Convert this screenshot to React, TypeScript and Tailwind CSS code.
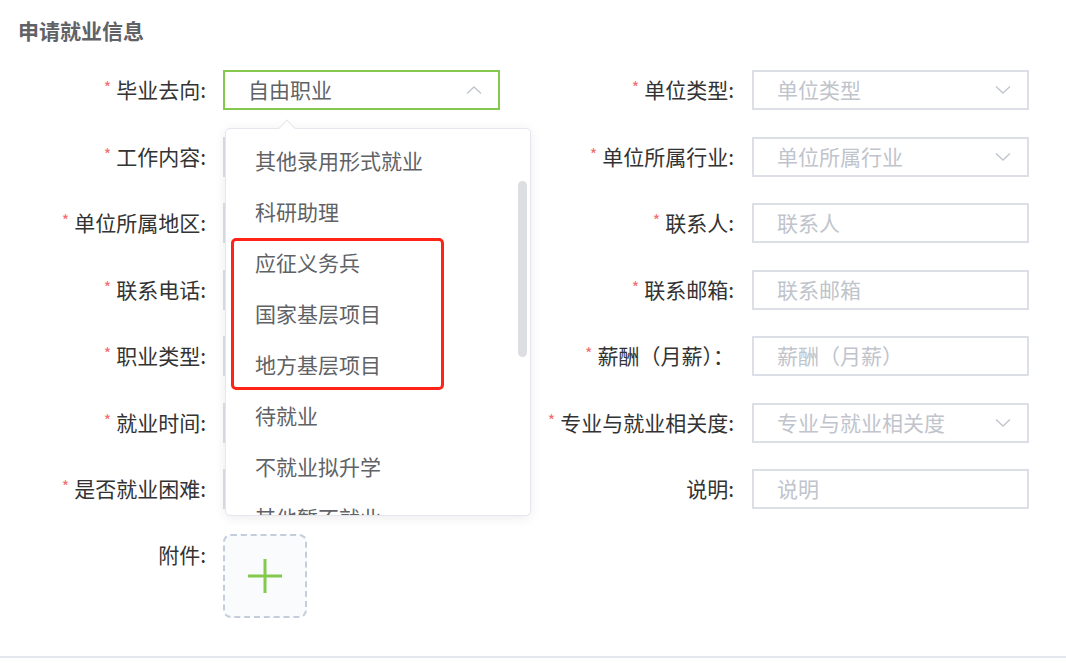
import React from 'react';

type Field = {
    label: string;
    required?: boolean;
    placeholder?: string;
    value?: string;
    select?: boolean;
    open?: boolean;
};

// left column fields below 毕业去向 sit under the open dropdown, so no placeholders there
const rows: [Field, Field][] = [
    [
        { label: '毕业去向:', required: true, value: '自由职业', select: true, open: true },
        { label: '单位类型:', required: true, placeholder: '单位类型', select: true },
    ],
    [
        { label: '工作内容:', required: true },
        { label: '单位所属行业:', required: true, placeholder: '单位所属行业', select: true },
    ],
    [
        { label: '单位所属地区:', required: true },
        { label: '联系人:', required: true, placeholder: '联系人' },
    ],
    [
        { label: '联系电话:', required: true },
        { label: '联系邮箱:', required: true, placeholder: '联系邮箱' },
    ],
    [
        { label: '职业类型:', required: true },
        { label: '薪酬（月薪）：', required: true, placeholder: '薪酬（月薪）' },
    ],
    [
        { label: '就业时间:', required: true },
        { label: '专业与就业相关度:', required: true, placeholder: '专业与就业相关度', select: true },
    ],
    [
        { label: '是否就业困难:', required: true },
        { label: '说明:', placeholder: '说明' },
    ],
];

const options = [
    '其他录用形式就业',
    '科研助理',
    '应征义务兵',
    '国家基层项目',
    '地方基层项目',
    '待就业',
    '不就业拟升学',
    '其他暂不就业',
];

function Chevron({ up }: { up?: boolean }) {
    return (
        <svg width="16" height="9" viewBox="0 0 16 9" fill="none" className="absolute right-[16px] top-1/2 -translate-y-1/2">
            <path
                d={up ? 'M1 8L8 1.5L15 8' : 'M1 1L8 7.5L15 1'}
                stroke="#c0c4cc"
                strokeWidth="1.3"
            />
        </svg>
    );
}

function Label({ field, width }: { field: Field; width: string }) {
    return (
        <div className={`${width} flex items-center justify-end text-[21px] text-[#333333] whitespace-nowrap`}>
            {field.required && (
                <span className="text-[#f56c6c] text-[16px] mr-[5px] relative -top-[3px]">*</span>
            )}
            {field.label}
        </div>
    );
}

function Input({ field, ml }: { field: Field; ml: string }) {
    return (
        <div
            className={`${ml} relative w-[277px] h-[40px] flex items-center pl-[23px] border-2 bg-white text-[21px] ${
                field.open ? 'border-[#84c84e]' : 'border-[#dcdfe6]'
            }`}
        >
            {field.value ? (
                <span className="text-[#606266]">{field.value}</span>
            ) : field.placeholder ? (
                <span className="text-[#c0c4cc]">{field.placeholder}</span>
            ) : null}
            {field.select && <Chevron up={field.open} />}
        </div>
    );
}

export default function App() {
    return (
        <div className="relative w-[1066px] h-[663px] bg-white overflow-hidden font-['Noto_Sans_CJK_SC','Noto_Sans',sans-serif]">
            <div className="h-[70px] pl-[18px] pt-[18px] text-[21px] leading-[24px] font-bold text-[#606266]">
                申请就业信息
            </div>

            <div className="flex flex-col gap-y-[26.5px]">
                {rows.map(([left, right], i) => (
                    <div key={i} className="flex h-[40px]">
                        <Label field={left} width="w-[206px]" />
                        <Input field={left} ml="ml-[17px]" />
                        <Label field={right} width="w-[234px]" />
                        <Input field={right} ml="ml-[18px]" />
                    </div>
                ))}
            </div>

            <div className="flex mt-[25px]">
                <div className="w-[206px] text-right text-[21px] leading-[40px] text-[#333333]">附件:</div>
                <div className="ml-[17px] w-[84px] h-[84px] rounded-[8px] border-2 border-dashed border-[#c3cddb] bg-[#fafbfd] flex items-center justify-center">
                    <svg width="36" height="36" viewBox="0 0 36 36">
                        <path d="M18 1V35M1 18H35" stroke="#84c84e" strokeWidth="3" />
                    </svg>
                </div>
            </div>

            <div className="mt-[38px] h-[2px] bg-[#e4e7ed]" />

            {/* dropdown of 毕业去向 */}
            <div className="absolute left-[281px] top-[122px] w-[12px] h-[12px] rotate-45 bg-white border-l border-t border-[#e4e7ed] z-20" />
            <div className="absolute left-[225px] top-[128px] w-[306px] h-[388px] bg-white border border-[#e4e7ed] rounded-[5px] shadow-[0_2px_12px_rgba(0,0,0,0.08)] overflow-hidden z-10">
                <div className="pt-[6px]">
                    {options.map((o) => (
                        <div key={o} className="h-[51px] flex items-center pl-[29px] text-[21px] text-[#606266] whitespace-nowrap">
                            {o}
                        </div>
                    ))}
                </div>
                <div className="absolute left-[292px] top-[52px] w-[9px] h-[176px] rounded-full bg-[#dddee1]" />
            </div>

            {/* highlight annotation */}
            <div className="absolute left-[231px] top-[238px] w-[213px] h-[152px] border-[3px] border-[#ff2416] rounded-[5px] z-30" />
        </div>
    );
}
